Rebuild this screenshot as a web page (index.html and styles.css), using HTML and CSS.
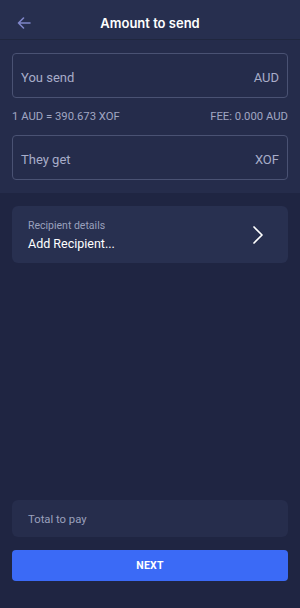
FILE: index.html
```html
<!DOCTYPE html>
<html>
<head>
<meta charset="utf-8">
<link rel="stylesheet" href="styles.css">
</head>
<body>
<div class="app">
  <header class="header">
    <svg class="back" width="14" height="12" viewBox="0 0 14 12"><path d="M13 6H1.5M6.5 1L1.5 6l5 5" fill="none" stroke="#7f86c9" stroke-width="1.6" stroke-linecap="round" stroke-linejoin="round"/></svg>
    <h1 class="title">Amount to send</h1>
  </header>
  <section class="top">
    <div class="field"><span class="label">You send</span><span class="cur">AUD</span></div>
    <div class="rate"><span>1 AUD = 390.673 XOF</span><span>FEE: 0.000 AUD</span></div>
    <div class="field"><span class="label">They get</span><span class="cur">XOF</span></div>
  </section>
  <main class="main">
    <div class="recipient">
      <div class="rtext">
        <div class="rlabel">Recipient details</div>
        <div class="rvalue">Add Recipient...</div>
      </div>
      <svg class="chev" width="12" height="20" viewBox="0 0 12 20"><path d="M2 2l8 8-8 8" fill="none" stroke="#ffffff" stroke-width="1.7" stroke-linecap="round" stroke-linejoin="round"/></svg>
    </div>
    <div class="spacer"></div>
    <div class="total">Total to pay</div>
    <button class="next">NEXT</button>
  </main>
</div>
</body>
</html>
```
FILE: styles.css
```css
* { box-sizing: border-box; }
html, body { margin: 0; padding: 0; }
body {
  width: 300px;
  height: 608px;
  background: #1f2542;
  font-family: Roboto, "Liberation Sans", sans-serif;
  overflow: hidden;
}
.app {
  height: 608px;
  display: flex;
  flex-direction: column;
}
.header {
  height: 40px;
  background: #272f4f;
  display: flex;
  align-items: center;
  justify-content: center;
  position: relative;
  border-bottom: 1px solid #20273f;
}
.back {
  position: absolute;
  left: 17px;
  top: 17px;
}
.title {
  margin: 0;
  font-family: Inter, "Liberation Sans", sans-serif;
  font-size: 13px;
  font-weight: 600;
  color: #ffffff;
  padding-top: 6px;
}
.top {
  background: #252c4b;
  padding: 13px 12px 13px;
  display: flex;
  flex-direction: column;
}
.field {
  height: 45px;
  border: 1px solid #4a5273;
  border-radius: 4px;
  display: flex;
  align-items: center;
  justify-content: space-between;
  padding: 3px 8px 0 8px;
  font-size: 13px;
  color: #a8adc9;
}
.rate {
  display: flex;
  justify-content: space-between;
  font-size: 11.3px;
  color: #a0a6c2;
  padding: 12px 0 12px;
}
.main {
  flex: 1;
  display: flex;
  flex-direction: column;
  padding: 13px 12px 27px;
}
.recipient {
  height: 57px;
  background: #283050;
  border-radius: 6px;
  display: flex;
  align-items: center;
  justify-content: space-between;
  padding: 0 24px 0 16px;
}
.rlabel {
  font-size: 10.5px;
  color: #9aa0bd;
  margin-bottom: 4px;
}
.rvalue {
  font-size: 12.5px;
  color: #ffffff;
}
.chev { margin-top: 1px; }
.spacer { flex: 1; }
.total {
  height: 37px;
  background: #262d4c;
  border-radius: 6px;
  display: flex;
  align-items: center;
  padding: 1px 16px 0;
  font-size: 11.3px;
  color: #9aa0bd;
}
.next {
  margin-top: 13px;
  height: 31px;
  width: 100%;
  border: none;
  border-radius: 4px;
  background: #3b6af6;
  color: #ffffff;
  font-family: Roboto, "Liberation Sans", sans-serif;
  font-size: 10.5px;
  font-weight: 700;
  letter-spacing: 0.2px;
}
```
